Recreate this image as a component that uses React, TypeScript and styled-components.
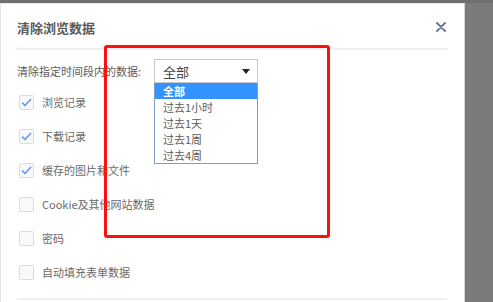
import React from "react";
import styled, { createGlobalStyle } from "styled-components";

const Global = createGlobalStyle`
  html, body { margin: 0; padding: 0; background: #7a7a7a; }
  body { font-family: "Noto Sans CJK SC", "Noto Sans", sans-serif; }
  * { box-sizing: border-box; }
`;

const Page = styled.div`
  position: relative;
  width: 493px;
  height: 302px;
  overflow: hidden;
  background: #7b7b7b;
  padding-top: 3px;
  &::before {
    content: "";
    position: absolute;
    left: 0; top: 0; right: 0; height: 3px;
    background: #6f6f6f;
  }
`;

const Dialog = styled.div`
  width: 465px;
  height: 299px;
  background: #fff;
  border-left: 1px solid #e4e4e4;
  border-right: 1px solid #d6d6d6;
  border-top: 1px solid #e8e8e8;
  padding: 0 17px 0 16px;
  display: flex;
  flex-direction: column;
`;

const Header = styled.div`
  height: 44px;
  padding-top: 2px;
  display: flex;
  align-items: center;
  justify-content: space-between;
`;

const Title = styled.div`
  font-size: 13px;
  font-weight: 700;
  color: #5a5a5a;
`;

const Close = styled.div`
  width: 10px;
  height: 10px;
  margin-right: 1px;
  display: flex;
`;

const Divider = styled.div`
  height: 2px;
  background: #eef0f4;
  flex-shrink: 0;
`;

const TimeRow = styled.div`
  margin-top: 9px;
  height: 24px;
  display: flex;
  align-items: center;
`;

const TimeLabel = styled.div`
  width: 137px;
  font-size: 11px;
  color: #5c5c5c;
  white-space: nowrap;
`;

const SelectWrap = styled.div`
  position: relative;
  width: 104px;
  height: 24px;
`;

const SelectBox = styled.div`
  height: 24px;
  border: 1px solid #c8c8c8;
  background: #fff;
  display: flex;
  align-items: center;
  justify-content: space-between;
  padding: 0 7px 0 8px;
  font-size: 13px;
  color: #444;
`;

const Caret = styled.div`
  width: 0;
  height: 0;
  border-left: 4px solid transparent;
  border-right: 4px solid transparent;
  border-top: 5px solid #222;
`;

const List = styled.div`
  position: absolute;
  left: 0;
  top: 24px;
  width: 104px;
  border: 1px solid #7d9ccb;
  border-top: 0;
  background: #fff;
  z-index: 2;
`;

const Item = styled.div<{ $active?: boolean }>`
  height: 16px;
  line-height: 16px;
  padding-left: 8px;
  font-size: 11px;
  color: ${(p) => (p.$active ? "#fff" : "#5c5c5c")};
  background: ${(p) => (p.$active ? "#3394ff" : "#fff")};
  font-weight: ${(p) => (p.$active ? 600 : 400)};
`;

const Options = styled.div`
  margin-top: 2px;
  display: flex;
  flex-direction: column;
`;

const Row = styled.div`
  height: 34px;
  display: flex;
  align-items: center;
  padding-left: 2px;
`;

const Box = styled.div`
  width: 15px;
  height: 15px;
  border: 1px solid #dcdcdc;
  border-radius: 2px;
  background: #f9f9f9;
  display: flex;
  align-items: center;
  justify-content: center;
  margin-right: 8px;
`;

const RowLabel = styled.div`
  font-size: 11px;
  color: #6a6a6a;
`;

const BottomDivider = styled(Divider)`
  margin-top: 9px;
`;

const Annotation = styled.div`
  position: absolute;
  left: 104px;
  top: 45px;
  width: 226px;
  height: 193px;
  border: 3px solid #ff1010;
  border-radius: 3px;
  z-index: 5;
  pointer-events: none;
`;

const options = [
  { label: "浏览记录", checked: true },
  { label: "下载记录", checked: true },
  { label: "缓存的图片和文件", checked: true },
  { label: "Cookie及其他网站数据", checked: false },
  { label: "密码", checked: false },
  { label: "自动填充表单数据", checked: false },
];

const ranges = ["全部", "过去1小时", "过去1天", "过去1周", "过去4周"];

export default function App() {
  return (
    <>
      <Global />
      <Page>
        <Dialog>
          <Header>
            <Title>清除浏览数据</Title>
            <Close>
              <svg width="10" height="10" viewBox="0 0 10 10">
                <path d="M1 1 L9 9 M9 1 L1 9" stroke="#6c7c9c" strokeWidth="2" strokeLinecap="round" />
              </svg>
            </Close>
          </Header>
          <Divider />
          <TimeRow>
            <TimeLabel>清除指定时间段内的数据:</TimeLabel>
            <SelectWrap>
              <SelectBox>
                <span>全部</span>
                <Caret />
              </SelectBox>
              <List>
                {ranges.map((r, i) => (
                  <Item key={r} $active={i === 0}>
                    {r}
                  </Item>
                ))}
              </List>
            </SelectWrap>
          </TimeRow>
          <Options>
            {options.map((o) => (
              <Row key={o.label}>
                <Box>
                  {o.checked && (
                    <svg width="11" height="9" viewBox="0 0 11 9">
                      <path d="M1 4.5 L4 7.5 L10 1" fill="none" stroke="#5a8fe8" strokeWidth="1.3" />
                    </svg>
                  )}
                </Box>
                <RowLabel>{o.label}</RowLabel>
              </Row>
            ))}
          </Options>
          <BottomDivider />
        </Dialog>
        <Annotation />
      </Page>
    </>
  );
}
